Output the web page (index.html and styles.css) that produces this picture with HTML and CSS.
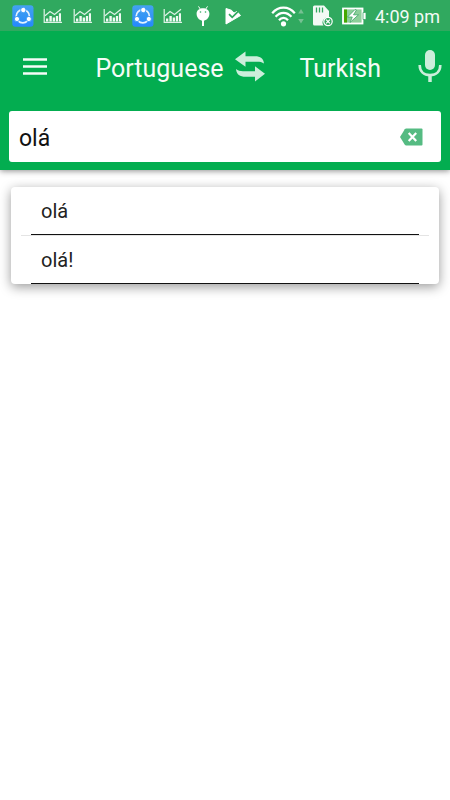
FILE: index.html
```html
<!DOCTYPE html>
<html lang="en">
<head>
<meta charset="utf-8">
<meta name="viewport" content="width=device-width, initial-scale=1">
<title>Translator</title>
<link rel="stylesheet" href="styles.css">
</head>
<body>
<svg class="defs" aria-hidden="true">
  <defs>
    <linearGradient id="blue" x1="0" y1="0" x2="0" y2="1"><stop offset="0" stop-color="#43a3ef"/><stop offset="1" stop-color="#2589fb"/></linearGradient>
    <symbol id="share" viewBox="0 0 22 22">
      <rect x="0.3" y="0.3" width="21.2" height="21.4" rx="3" fill="url(#blue)"/>
      <circle cx="10.8" cy="11.3" r="6.6" fill="none" stroke="#e4f2ff" stroke-width="1.7"/>
      <g fill="#fff" stroke="#3596f5" stroke-width=".9"><circle cx="11.3" cy="5" r="2.7"/><circle cx="5" cy="14" r="2.6"/><circle cx="16.800" cy="14" r="2.600"/></g>
    </symbol>
    <symbol id="chart" viewBox="0 0 20 16">
      <g fill="none" stroke="#dff2e7"><path d="M1.2 1V14.400H19" stroke-width="1.200"/><path d="M2 7.800L7 3.500l4.500 3L18 1.300" stroke-width="1.200"/></g>
      <path fill="#eef9f2" d="M3 10.500h2.300v3H3zM6.400 8h2.400v5.500H6.400zM9.700 9.500h2.400v4H9.700zM12.900 8h2.200v5.500h-2.200zM15.900 5.200H18v8.300h-2.100z"/>
    </symbol>
  </defs>
</svg>
<header class="top">
  <div class="status">
    <div class="notes">
      <span class="slot"><svg width="22" height="22"><use href="#share"/></svg></span>
      <span class="slot"><svg width="20" height="16"><use href="#chart"/></svg></span>
      <span class="slot"><svg width="20" height="16"><use href="#chart"/></svg></span>
      <span class="slot"><svg width="20" height="16"><use href="#chart"/></svg></span>
      <span class="slot"><svg width="22" height="22"><use href="#share"/></svg></span>
      <span class="slot"><svg width="20" height="16"><use href="#chart"/></svg></span>
      <span class="slot"><svg width="14" height="20" viewBox="0 0 14 20"><path d="M2.500 .4l2 3M11.500 .4l-2 3" stroke="#fff"/><path fill="#fff" d="M.6 7.500C.6 4.500 3.200 2.200 7 2.200s6.400 2.300 6.400 5.300c0 4-2.400 6.500-5.400 7.200V20H6v-5.300C3 14 .6 11.500.6 7.500z"/><circle cx="4.500" cy="6" r=".8" fill="#30a95f"/><circle cx="9.500" cy="6" r=".8" fill="#30a95f"/></svg></span>
      <span class="slot"><svg width="18" height="18" viewBox="0 0 18 18"><path fill="#fff" stroke="#fff" stroke-linejoin="round" d="M2 1.500l5.500 1.800L10 6l3-1.500L16.500 8.500 2 17z"/><path fill="none" stroke="#30a95f" stroke-width="1.700" d="M5 7.200l3.200 3.200 6-6"/></svg></span>
    </div>
    <div class="system">
      <svg width="33" height="22" viewBox="0 0 33 22"><g fill="none" stroke="#fff" stroke-width="2.200"><path d="M1.200 8.200C7.500.8 17.500.8 23.800 8.200"/><path d="M4.600 11.700c4.500-5.200 11.300-5.200 15.800 0"/><path d="M8 15.200c2.500-3 6.500-3 9 0"/></g><circle cx="12.500" cy="18.800" r="2.600" fill="#fff"/><path fill="#76c193" d="M30 4l2.800 4.500h-5.600zM30 18.500l2.800-4.500h-5.600z"/></svg>
      <svg width="20" height="22" viewBox="0 0 20 22"><path fill="#f2faf5" d="M0 2Q0 .5 1.500 .5H11l5 5.500v6a5.500 5.500 0 0 0-5.500 8.500h-9Q0 20.500 0 19z"/><path d="M3.500 2.500v5M6.500 2.500v5M9.500 2.500v5" stroke="#30a95f" stroke-width="1.300"/><circle cx="15" cy="16.500" r="4.200" fill="#30a95f" stroke="#fff" stroke-width="1.200"/><path d="M13.100 14.600l3.800 3.800M16.900 14.600l-3.800 3.800" stroke="#fff" stroke-width="1.300"/></svg>
      <svg width="24" height="18" viewBox="0 0 24 18"><rect x="1" y="1.500" width="19.500" height="15" fill="#8ccf9a" stroke="#fff" stroke-width="1.800"/><path fill="#46a800" d="M2 2.500h3v13H2z"/><path fill="#fff" stroke="#3da668" stroke-width=".8" d="M21 5.500h3v7h-3zM13 2.500L5.500 10h4.800L8 15.500l8.500-7.700h-5L14.500 3z"/></svg>
      <time>4:09 pm</time>
    </div>
  </div>
  <nav class="bar">
    <button class="menu" aria-label="Menu"><svg width="24" height="18" viewBox="0 0 24 18"><path d="M0 1.500h24M0 8.500h24M0 15.500h24" stroke="#f5fcf7" stroke-width="2.600"/></svg></button>
    <button class="lang from">Portuguese</button>
    <button class="swap" aria-label="Swap languages"><svg width="30" height="32" viewBox="0 0 30 32"><path fill="#cceedb" d="M0 8.300L10.500 .500V5.200H20c5.500 0 8.500 2.300 9 7.300-2-1.500-4-1.800-7-1.800H10.500v5zM30 22.700L20 30.500v-4.700h-9.500C5 25.800 1.500 23.500 1 18c2 1.800 4 2.200 7 2.200h12v-5z"/></svg></button>
    <button class="lang to">Turkish</button>
    <button class="mic" aria-label="Speak"><svg width="24" height="34" viewBox="0 0 24 34"><rect x="7" y="0" width="10" height="20" rx="5" fill="#cceedb"/><path fill="none" stroke="#cceedb" stroke-width="2.600" d="M1.700 15c0 6.600 4.300 10 10.300 10s10.300-3.400 10.300-10"/><path fill="none" stroke="#cceedb" stroke-width="3.500" d="M12 25v7"/></svg></button>
  </nav>
  <form class="search">
    <input type="text" value="olá" aria-label="Text to translate" autocomplete="off">
    <button type="button" class="clear" aria-label="Clear"><svg width="24" height="18" viewBox="0 0 24 18"><path fill="#55bb82" d="M1 9L5.800 1.200Q6.300.4 7.200.4H22.500q1 0 1 1v15.200q0 1-1 1H7.200q-.9 0-1.400-.8z"/><path d="M9.700 5l7.500 8M17.200 5l-7.500 8" stroke="#fff" stroke-width="2.200"/></svg></button>
  </form>
</header>
<main>
  <ul class="suggestions">
    <li><button>olá</button></li>
    <li><button>olá!</button></li>
  </ul>
</main>
</body>
</html>
```
FILE: styles.css
```css
* { box-sizing: border-box; }
body { margin: 0; background: #fff; color: #222; font-family: Roboto, "Liberation Sans", sans-serif; }
svg { display: block; flex: none; }
button { border: 0; padding: 0; background: none; color: inherit; font: inherit; }
.defs { position: absolute; width: 0; height: 0; }
.top { background: #03ad50; padding-bottom: 8px; box-shadow: 0 1px 6px rgba(0, 0, 0, .45); }
.status { display: flex; justify-content: space-between; align-items: center; height: 31px; padding: 0 10px 0 8px; background: #30a95f; color: #f2faf5; }
.notes { display: flex; }
.slot { width: 30px; height: 31px; display: flex; align-items: center; justify-content: center; }
.system { display: flex; align-items: center; gap: 9px; }
.system time { padding-top: 2px; font-size: 18px; line-height: 29px; }
.bar { display: flex; align-items: center; height: 72px; padding: 0 8px 0 23px; color: #f5fcf7; }
.lang { padding-top: 4px; font-size: 25px; line-height: 32px; }
.from { margin-left: auto; }
.swap { margin: 0 35px 0 11px; }
.mic { margin-left: 37px; }
.search { display: flex; align-items: center; margin: 8px 9px 0; height: 51px; padding: 0 18px 0 10px; background: #fff; border-radius: 3px; }
.search input { flex: 1; min-width: 0; border: 0; outline: 0; padding: 3px 0 0; background: none; color: #111; font: inherit; font-size: 23px; }
.suggestions { list-style: none; margin: 17px 11px; padding: 0 10px; background: #fff; border-radius: 4px; box-shadow: 0 3px 12px rgba(0, 0, 0, .4); }
.suggestions li { padding: 0 10px; }
.suggestions li + li { border-top: 1px solid #e4e4e4; }
.suggestions button { display: block; width: 100%; height: 48px; padding: 0 10px; border-bottom: 1px solid #111; text-align: left; font-size: 20px; }
```
